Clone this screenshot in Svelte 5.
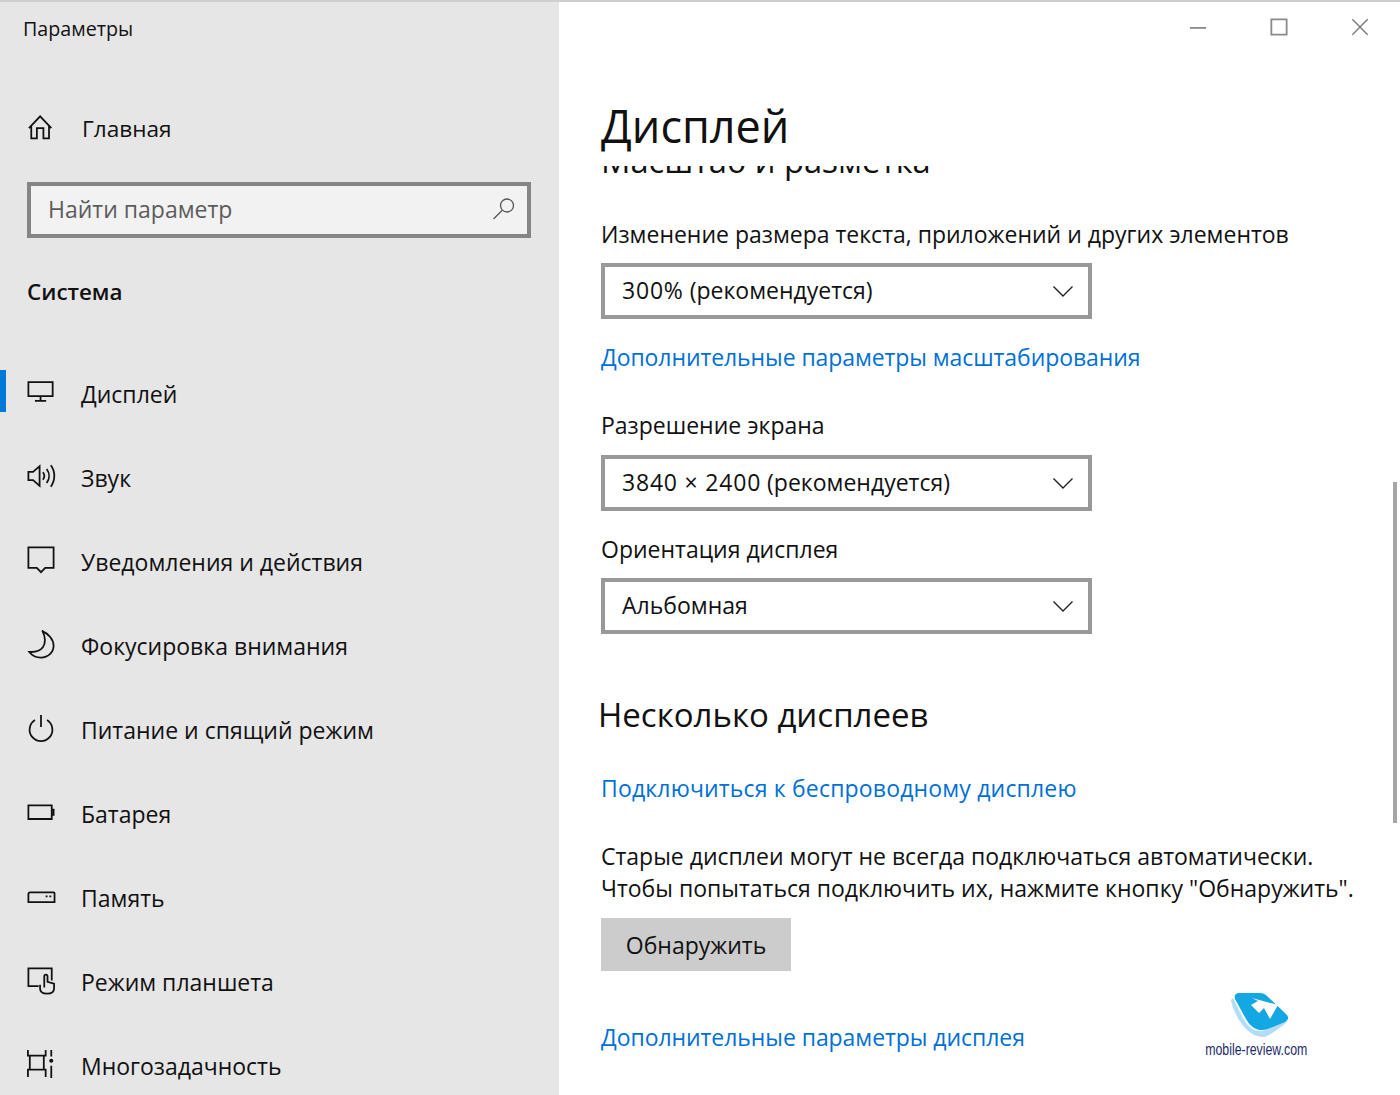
<script>
	const navItems = [
		{ name: 'Дисплей', icon: 'display', active: true },
		{ name: 'Звук', icon: 'sound' },
		{ name: 'Уведомления и действия', icon: 'notify' },
		{ name: 'Фокусировка внимания', icon: 'moon' },
		{ name: 'Питание и спящий режим', icon: 'power' },
		{ name: 'Батарея', icon: 'battery' },
		{ name: 'Память', icon: 'storage' },
		{ name: 'Режим планшета', icon: 'tablet' },
		{ name: 'Многозадачность', icon: 'multi' }
	]
</script>

<div class="window">
	<aside class="sidebar">
		<div class="appTitle">Параметры</div>
		<div class="homeRow">
			<svg class="icon" viewBox="0 0 30 30">
				<path d="M1 14 13 1.500 25 14M3.500 11.500V25H9.500V14h7v11H22.500V11.500" />
			</svg>
			<span>Главная</span>
		</div>
		<div class="search">
			<span class="searchText">Найти параметр</span>
			<svg class="searchIcon" viewBox="0 0 24 24">
				<circle cx="15" cy="8.500" r="6.500" />
				<path d="M10 13.500 1.500 22" />
			</svg>
		</div>
		<div class="sectionTitle">Система</div>
		<nav class="nav">
			{#each navItems as item (item.name)}
				<div class="navItem" class:active={item.active}>
					<svg class="icon" viewBox="0 0 30 30">
						{#if item.icon === 'display'}
							<path d="M1.500 4.500h26v15h-26zM14.500 19.500v5M8.500 24.500h12" />
						{:else if item.icon === 'sound'}
							<path d="M1.500 10.500h5l7-6v21l-7-6h-5zM17 11c2 2.500 2 5.500 0 8M21 7.500c3.500 4.500 3.500 10.500 0 15M25.500 3.500c5 6.500 5 16 0 23" />
						{:else if item.icon === 'notify'}
							<path d="M1.500 1.500h27v22h-9l-4.500 4.500-4.500-4.500h-9z" />
						{:else if item.icon === 'moon'}
							<path d="M16 1C23 4 28.500 10 28.500 17c0 7-6 12.500-13.500 12.500-5 0-9.500-2-12.500-6 7 .5 11.500-1 14.500-5s3-11-.5-17.500z" />
						{:else if item.icon === 'power'}
							<path d="M8.500 6.500a12.200 12.200 0 1 0 13 0M15 1v13" />
						{:else if item.icon === 'battery'}
							<path d="M1.500 8h25v14.500h-25zM26.500 12.500h2v5.500h-2z" />
						{:else if item.icon === 'storage'}
							<path d="M3.500 11h25q1 0 1 1v9.500H1.500V13q0-2 2-2zM20 15.500h2M24 15.500h2" />
						{:else if item.icon === 'tablet'}
							<path d="M12.500 21.500H1.500V2.500h25v13M14 20v4c0 3.500 3 5.500 7.500 5.500s7.500-2 7.500-5.500v-5l-7-2v-6c0-2.500-3.500-2.500-3.500 0V23" />
						{:else if item.icon === 'multi'}
							<path d="M1 0v6h19V0M3 6v15M18 6v15M1 29v-8h19v8M26 0v7M26 17v13" />
							<circle class="dot" cx="26" cy="11.500" r="2.200" />
						{/if}
					</svg>
					<span>{item.name}</span>
				</div>
			{/each}
		</nav>
	</aside>

	<main class="main">
		<div class="titleBar">
			<svg class="winBtn" viewBox="0 0 20 20"><path d="M1 11h18" /></svg>
			<svg class="winBtn" viewBox="0 0 20 20"><path d="M1.500 1.500h17v17h-17z" /></svg>
			<svg class="winBtn thin" viewBox="0 0 20 20"><path d="M1.500 1.500l17 17M18.500 1.500l-17 17" /></svg>
		</div>
		<h1>Дисплей</h1>
		<div class="scroller">
			<div class="content">
				<h2 class="clipped">Масштаб и разметка</h2>
				<div class="label first">Изменение размера текста, приложений и других элементов</div>
				<div class="select">
					<span><span class="num">300%</span> (рекомендуется)</span>
					<svg class="chevron" viewBox="0 0 20 11"><path d="M.5 .5l9.500 9.500 9.500-9.500" /></svg>
				</div>
				<div class="link scale">Дополнительные параметры масштабирования</div>
				<div class="label res">Разрешение экрана</div>
				<div class="select">
					<span><span class="num">3840 × 2400</span> (рекомендуется)</span>
					<svg class="chevron" viewBox="0 0 20 11"><path d="M.5 .5l9.500 9.500 9.500-9.500" /></svg>
				</div>
				<div class="label orient">Ориентация дисплея</div>
				<div class="select">
					<span>Альбомная</span>
					<svg class="chevron" viewBox="0 0 20 11"><path d="M.5 .5l9.500 9.500 9.500-9.500" /></svg>
				</div>
				<h2 class="multi">Несколько дисплеев</h2>
				<div class="link wireless">Подключиться к беспроводному дисплею</div>
				<p class="note">Старые дисплеи могут не всегда подключаться автоматически.<br />Чтобы попытаться подключить их, нажмите кнопку "Обнаружить".</p>
				<button class="detect">Обнаружить</button>
				<div class="link extra">Дополнительные параметры дисплея</div>
			</div>
		</div>
		<div class="scrollThumb"></div>
		<div class="watermark">
			<svg class="logo" viewBox="0 0 60 52">
				<path class="logoBack" d="M1 8c1 8 7 20 14 28 5 5 11 9 19 9 4 0 20-12 23-15l-1-1-20 9c-6 2-11 1-15-2-4-3-6-7-8-10L3 6z" />
				<path class="logoFront" d="M9 1H30c3 0 5 1 7 3l19 18c3 3 3 6-1 8L38 37c-5 2-11 1-14-1-3-2-6-5-8-9L5 7C4 3 6 1 9 1z" />
				<path class="logoArrow" d="M22 6l26 7-8 14-6-11-5 5-8-8 7-4z" />
			</svg>
			<span class="logoText">mobile-review.com</span>
		</div>
	</main>
</div>

<style>
	:global(body) {
		margin: 0;
		overflow: hidden;
		background: #ffffff;
	}

	.window {
		display: flex;
		height: 1095px;
		box-sizing: border-box;
		border-top: 2px solid #cfcfcf;
		font-family: "Open Sans", "Noto Sans", sans-serif;
		font-size: 23px;
		color: #111111;
		overflow: hidden;
	}

	.sidebar {
		flex: 0 0 559px;
		background: #e6e6e6;
		display: flex;
		flex-direction: column;
		box-sizing: border-box;
	}

	.sidebar > * {
		flex: none;
	}

	.appTitle {
		font-size: 19.7px;
		line-height: 26px;
		padding: 14px 0 0 23px;
	}

	.homeRow {
		display: flex;
		align-items: center;
		gap: 26px;
		margin-top: 66px;
		padding-left: 28px;
		height: 40px;
		font-size: 22.6px;
	}

	.icon {
		flex: none;
		width: 28px;
		height: 28px;
		margin-bottom: 4px;
		overflow: visible;
		fill: none;
		stroke: #111111;
		stroke-width: 1.900;
	}

	.homeRow .icon {
		margin: 1px 0 0;
	}

	.dot {
		fill: #111111;
		stroke: none;
	}

	.search {
		display: flex;
		align-items: center;
		justify-content: space-between;
		box-sizing: border-box;
		width: 504px;
		height: 56px;
		margin: 34px 0 0 27px;
		padding: 0 11px 2px 17px;
		border: 4px solid #858585;
		background: #f2f2f2;
	}

	.searchText {
		color: #5c5c5c;
	}

	.searchIcon {
		width: 24px;
		height: 24px;
		fill: none;
		stroke: #555555;
		stroke-width: 1.300;
	}

	.sectionTitle {
		font-size: 22.4px;
		font-weight: 600;
		line-height: 32px;
		margin: 38px 0 0 27px;
	}

	.nav {
		margin-top: 44px;
	}

	.navItem {
		display: flex;
		align-items: center;
		gap: 26px;
		height: 84px;
		padding-left: 27px;
		position: relative;
	}

	.navItem.active::before {
		content: "";
		position: absolute;
		left: 0;
		top: 18px;
		width: 6px;
		height: 42px;
		background: #0078d7;
	}

	.main {
		flex: 1;
		position: relative;
		display: flex;
		flex-direction: column;
		min-width: 0;
	}

	.titleBar {
		flex: none;
		display: flex;
		justify-content: flex-end;
		gap: 63px;
		height: 52px;
		padding: 16px 31px 0 0;
		box-sizing: border-box;
	}

	.winBtn {
		width: 18px;
		height: 18px;
		fill: none;
		stroke: #8a8a8a;
		stroke-width: 2;
	}

	.winBtn.thin {
		stroke: #777777;
		stroke-width: 1.500;
	}

	h1 {
		flex: none;
		font-size: 45px;
		font-weight: 400;
		line-height: 64px;
		margin: 40px 0 0 42px;
		height: 72px;
	}

	.scroller {
		flex: 1;
		overflow: hidden;
		padding-left: 42px;
		min-height: 0;
	}

	.content {
		margin-top: -28px;
	}

	h2 {
		font-weight: 400;
		font-size: 33px;
		line-height: 46px;
		margin: 0;
	}

	h2.clipped {
		font-size: 32.7px;
	}

	.label {
		line-height: 32px;
	}

	.label.first {
		margin-top: 34px;
	}

	.label.res {
		margin-top: 36px;
		line-height: 33px;
	}

	.label.orient {
		margin-top: 22px;
	}

	.select {
		display: flex;
		align-items: center;
		justify-content: space-between;
		box-sizing: border-box;
		width: 491px;
		height: 56px;
		margin-top: 13px;
		padding: 0 15px 2px 17px;
		border: 4px solid #999999;
	}

	.num {
		letter-spacing: 0.8px;
	}

	.chevron {
		width: 20px;
		height: 11px;
		margin-top: 2px;
		fill: none;
		stroke: #222222;
		stroke-width: 1.400;
	}

	.link {
		color: #0070d6;
		line-height: 32px;
	}

	.link.scale {
		margin-top: 22px;
		letter-spacing: -0.08px;
	}

	h2.multi {
		margin: 58px 0 0 -3px;
	}

	.link.wireless {
		margin-top: 34px;
		letter-spacing: 0.17px;
	}

	.note {
		margin: 36px 0 0;
		line-height: 32px;
	}

	.detect {
		display: block;
		width: 190px;
		height: 53px;
		margin-top: 14px;
		border: none;
		background: #cccccc;
		font: inherit;
		color: #111111;
	}

	.link.extra {
		margin-top: 50px;
		letter-spacing: -0.06px;
	}

	.scrollThumb {
		position: absolute;
		right: 3px;
		top: 480px;
		width: 4px;
		height: 341px;
		background: #a6a6a6;
	}

	.watermark {
		position: absolute;
		left: 642px;
		top: 990px;
		width: 110px;
		display: flex;
		flex-direction: column;
		align-items: center;
	}

	.logo {
		width: 60px;
		height: 52px;
		margin-left: 8px;
	}

	.logoBack {
		fill: #b5dcf7;
	}

	.logoFront {
		fill: #13a8e4;
	}

	.logoArrow {
		fill: #ffffff;
	}

	.logoText {
		font-family: "Liberation Sans", sans-serif;
		font-size: 16px;
		line-height: 18px;
		margin-top: -3px;
		color: #1d2a6d;
		white-space: nowrap;
		transform: scaleX(0.77);
	}
</style>
